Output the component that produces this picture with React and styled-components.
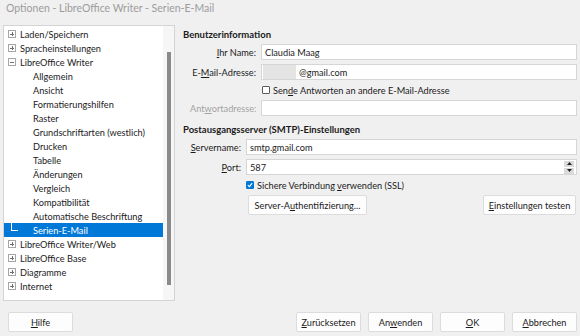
import React from 'react';
import styled, { createGlobalStyle } from 'styled-components';

const Global = createGlobalStyle`
  html, body { margin: 0; padding: 0; background: #f0f0f0; }
  body { font-family: Lato, "Open Sans", sans-serif; }
`;

const Window = styled.div`
  width: 580px;
  height: 336px;
  background: #f0f0f0;
  color: #1b1b1b;
  font-family: Lato, "Noto Sans", sans-serif;
  font-size: 9.2px;
  display: flex;
  flex-direction: column;
  overflow: hidden;
`;

const TitleBar = styled.div`
  height: 17px;
  line-height: 17px;
  padding-left: 6px;
  color: #9c9c9c;
  font-size: 10.5px;
  white-space: nowrap;
`;

const Main = styled.div`
  display: flex;
  gap: 8px;
  margin-top: 8px;
  padding: 0 3px;
  height: 276px;
`;

const TreePanel = styled.div`
  width: 170px;
  border: 1px solid #d4d4d4;
  background: #fff;
  display: flex;
`;

const TreeList = styled.div`
  flex: 1;
  padding-top: 1px;
  display: flex;
  flex-direction: column;
`;

const Row = styled.div`
  height: 14px;
  display: flex;
  align-items: center;
  padding-left: 4px;
  white-space: nowrap;
  background: ${p => (p.$selected ? '#0078d7' : 'transparent')};
  color: ${p => (p.$selected ? '#fff' : 'inherit')};
`;

const Expander = styled.span`
  width: 6px;
  height: 6px;
  border: 1px solid #a6a6a6;
  margin-right: 4px;
  position: relative;
  flex: none;
  &::before {
    content: '';
    position: absolute;
    left: 1px; right: 1px; top: 2.5px;
    height: 1px;
    background: #707070;
  }
  &::after {
    content: '';
    display: ${p => (p.$open ? 'none' : 'block')};
    position: absolute;
    top: 1px; bottom: 1px; left: 2.5px;
    width: 1px;
    background: #707070;
  }
`;

const ChildIndent = styled.span`
  width: 25px;
  flex: none;
  align-self: stretch;
  display: flex;
`;

const Connector = styled.span`
  margin-left: 3px;
  width: 6px;
  height: 7px;
  border-left: 1px solid #fff;
  border-bottom: 1px solid #fff;
`;

const ScrollTrack = styled.div`
  width: 11px;
  background: #f6f6f6;
  display: flex;
  flex-direction: column;
  align-items: center;
`;

const Thumb = styled.div`
  margin-top: 26px;
  width: 4px;
  height: 233px;
  background: #8a8a8a;
`;

const Content = styled.div`
  flex: 1;
  display: flex;
  flex-direction: column;
`;

const Heading = styled.div`
  font-weight: 700;
  font-size: 9.5px;
  height: 14px;
  line-height: 14px;
  margin-top: ${p => p.$mt}px;
  white-space: nowrap;
`;

const FormRow = styled.div`
  display: grid;
  grid-template-columns: ${p => p.$label}px 1fr;
  column-gap: 5px;
  align-items: center;
  padding-left: ${p => p.$indent}px;
  height: ${p => p.$h || 16}px;
  margin-top: ${p => p.$mt || 0}px;
`;

const Label = styled.span`
  text-align: right;
  white-space: nowrap;
  color: ${p => (p.$disabled ? '#a3a3a3' : 'inherit')};
`;

const Field = styled.div`
  height: 16px;
  box-sizing: border-box;
  border: 1px solid #d6d6d6;
  background: #fff;
  display: flex;
  align-items: center;
  padding-left: ${p => (p.$tight ? 1 : 3)}px;
  white-space: nowrap;
`;

const Redacted = styled.span`
  width: 33px;
  height: 14px;
  margin-right: 3px;
  background: #e4e4e4;
`;

const Spin = styled.div`
  margin-left: auto;
  margin-right: 2px;
  display: flex;
  flex-direction: column;
  gap: 1px;
`;

const SpinBtn = styled.div`
  width: 10px;
  height: 6px;
  background: #dadada;
  display: flex;
  align-items: center;
  justify-content: center;
`;

const CheckLine = styled.div`
  grid-column: 2;
  display: flex;
  align-items: center;
  white-space: nowrap;
`;

const Box = styled.span`
  width: 8px;
  height: 8px;
  box-sizing: border-box;
  flex: none;
  margin-left: ${p => p.$ml || 0}px;
  margin-right: 3px;
  border: 1px solid ${p => (p.$checked ? '#0078d7' : '#5a5a5a')};
  background: ${p => (p.$checked ? '#0078d7' : '#fff')};
  border-radius: 1px;
  display: flex;
  align-items: center;
  justify-content: center;
`;

const ButtonRow = styled.div`
  grid-column: 2;
  display: flex;
  justify-content: space-between;
  padding: 0 1px 0 2px;
`;

const Button = styled.div`
  width: ${p => p.$w}px;
  height: 20px;
  box-sizing: border-box;
  background: #fdfdfd;
  border: 1px solid #dcdcdc;
  border-radius: 2px;
  display: flex;
  align-items: center;
  justify-content: center;
  white-space: nowrap;
`;

const Footer = styled.div`
  display: flex;
  align-items: center;
  gap: 7px;
  margin-top: 11px;
  padding: 0 3px 0 8px;
`;

const Spacer = styled.div`
  flex: 1;
`;

const U = styled.span`
  text-decoration: underline;
  text-underline-offset: 1px;
`;

const tree = [
  { t: 'Laden/Speichern', top: true },
  { t: 'Spracheinstellungen', top: true },
  { t: 'LibreOffice Writer', top: true, open: true },
  { t: 'Allgemein' },
  { t: 'Ansicht' },
  { t: 'Formatierungshilfen' },
  { t: 'Raster' },
  { t: 'Grundschriftarten (westlich)' },
  { t: 'Drucken' },
  { t: 'Tabelle' },
  { t: 'Änderungen' },
  { t: 'Vergleich' },
  { t: 'Kompatibilität' },
  { t: 'Automatische Beschriftung' },
  { t: 'Serien-E-Mail', sel: true },
  { t: 'LibreOffice Writer/Web', top: true },
  { t: 'LibreOffice Base', top: true },
  { t: 'Diagramme', top: true },
  { t: 'Internet', top: true },
];

const Check = () => (
  <svg width="6" height="6" viewBox="0 0 6 6">
    <path d="M0.8 3.1 L2.4 4.6 L5.2 1.2" fill="none" stroke="#fff" strokeWidth="1.1" />
  </svg>
);

const Arrow = ({ up }) => (
  <svg width="5" height="3" viewBox="0 0 5 3">
    <path d={up ? 'M0 3 L2.5 0 L5 3 Z' : 'M0 0 L2.5 3 L5 0 Z'} fill="#222" />
  </svg>
);

export default function App() {
  return (
    <Window>
      <Global />
      <TitleBar>Optionen - LibreOffice Writer - Serien-E-Mail</TitleBar>
      <Main>
        <TreePanel>
          <TreeList>
            {tree.map(item => (
              <Row key={item.t} $selected={item.sel}>
                {item.top ? (
                  <Expander $open={item.open} />
                ) : (
                  <ChildIndent>{item.sel && <Connector />}</ChildIndent>
                )}
                {item.t}
              </Row>
            ))}
          </TreeList>
          <ScrollTrack>
            <Thumb />
          </ScrollTrack>
        </TreePanel>
        <Content>
          <Heading $mt={3}>Benutzerinformation</Heading>
          <FormRow $label={66} $indent={7} $mt={2}>
            <Label><U>I</U>hr Name:</Label>
            <Field>Claudia Maag</Field>
          </FormRow>
          <FormRow $label={66} $indent={7} $mt={4}>
            <Label>E-<U>M</U>ail-Adresse:</Label>
            <Field $tight>
              <Redacted />@gmail.com
            </Field>
          </FormRow>
          <FormRow $label={66} $indent={7} $h={20}>
            <CheckLine>
              <Box $ml={1} />
              <span>Sen<U>d</U>e Antworten an andere E-Mail-Adresse</span>
            </CheckLine>
          </FormRow>
          <FormRow $label={66} $indent={7}>
            <Label $disabled>Ant<U>w</U>ortadresse:</Label>
            <Field />
          </FormRow>
          <Heading $mt={7}>Postausgangsserver (SMTP)-Einstellungen</Heading>
          <FormRow $label={55} $indent={3} $mt={2}>
            <Label><U>S</U>ervername:</Label>
            <Field>smtp.gmail.com</Field>
          </FormRow>
          <FormRow $label={55} $indent={3} $mt={4}>
            <Label><U>P</U>ort:</Label>
            <Field>
              587
              <Spin>
                <SpinBtn><Arrow up /></SpinBtn>
                <SpinBtn><Arrow /></SpinBtn>
              </Spin>
            </Field>
          </FormRow>
          <FormRow $label={55} $indent={3} $h={20}>
            <CheckLine>
              <Box $checked><Check /></Box>
              <span>Sichere Verbindung <U>v</U>erwenden (SSL)</span>
            </CheckLine>
          </FormRow>
          <FormRow $label={55} $indent={3} $h={20}>
            <ButtonRow>
              <Button $w={119}><span>Server-A<U>u</U>thentifizierung...</span></Button>
              <Button $w={93}><span><U>E</U>instellungen testen</span></Button>
            </ButtonRow>
          </FormRow>
        </Content>
      </Main>
      <Footer>
        <Button $w={65}><span><U>H</U>ilfe</span></Button>
        <Spacer />
        <Button $w={65}><span><U>Z</U>urücksetzen</span></Button>
        <Button $w={65}><span>An<U>w</U>enden</span></Button>
        <Button $w={65}><span><U>O</U>K</span></Button>
        <Button $w={65}><span><U>A</U>bbrechen</span></Button>
      </Footer>
    </Window>
  );
}
